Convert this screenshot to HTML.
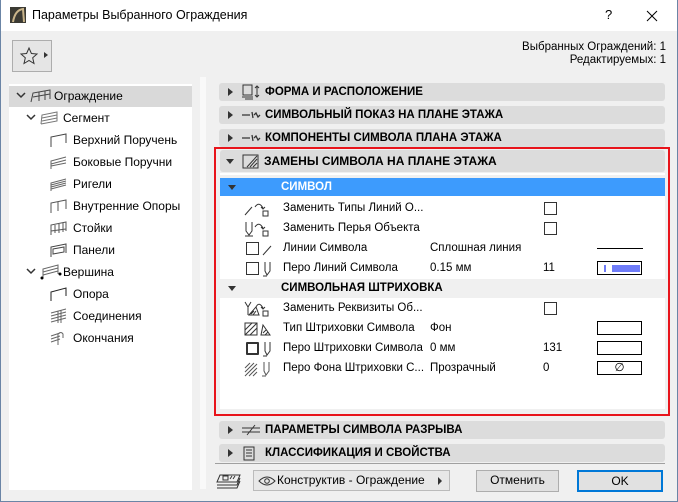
<!DOCTYPE html>
<html><head><meta charset="utf-8"><style>
*{box-sizing:border-box;margin:0;padding:0}
body{width:678px;height:502px;overflow:hidden;font-family:"Liberation Sans",sans-serif;font-size:12px;color:#000;background:#f0f0f0;position:relative}
.a{position:absolute}
.win{left:0;top:0;width:678px;height:502px;border:1px solid #6b85a6;border-top:none}
.title{left:1px;top:0;width:676px;height:31px;background:#fff}
.hdr{position:absolute;left:219px;width:446px;height:18px;background:#dcdcdc;border-radius:3px;font-weight:bold;font-size:11.5px;line-height:18px}
.hdr .t{position:absolute;left:46px}
.tri{position:absolute;width:0;height:0;border-top:4px solid transparent;border-bottom:4px solid transparent;border-left:5px solid #333;top:5px;left:9px}
.trd{position:absolute;width:0;height:0;border-left:4px solid transparent;border-right:4px solid transparent;border-top:5px solid #333}
.row{position:absolute;left:222px;width:443px;height:19px;background:#fff;line-height:19px;font-size:11.5px}
.row span{position:absolute}
.row span.l{left:61px}
.cb{position:absolute;width:13px;height:13px;border:1px solid #333;background:#fff;top:3px}
.box{position:absolute;left:375px;width:45px;height:14px;border:1px solid #000;top:2px}
.tree{font-size:12px;position:absolute;line-height:20px}
.btn{position:absolute;height:21px;border:1px solid #adadad;background:#e1e1e1;text-align:center;line-height:19px;font-size:12px}
</style></head><body>
<div class="a win"></div>
<div class="a title"></div>
<svg class="a" style="left:10px;top:7px" width="16" height="16"><rect width="16" height="16" fill="#3b3a33"/><path d="M3 15 Q5 3 13 2 L14 15" stroke="#c9b48a" stroke-width="2" fill="none"/></svg>
<div class="a" style="left:32px;top:8px;font-size:12.5px">Параметры Выбранного Ограждения</div>
<div class="a" style="left:605px;top:7px;font-size:13px">?</div>
<svg class="a" style="left:646px;top:10px" width="12" height="12"><path d="M1 1L11 11M11 1L1 11" stroke="#000" stroke-width="1"/></svg>

<div class="a" style="left:12px;top:40px;width:40px;height:32px;border:1px solid #adadad;background:#e5e5e5"></div>
<svg class="a" style="left:19px;top:46px" width="20" height="20"><path d="M10 2L12.4 7.5 18 8 13.7 11.8 15 17.5 10 14.5 5 17.5 6.3 11.8 2 8 7.6 7.5Z" fill="none" stroke="#333"/></svg>
<div class="a" style="left:44px;top:52px;width:0;height:0;border-top:3px solid transparent;border-bottom:3px solid transparent;border-left:4px solid #333"></div>

<div class="a" style="right:12px;top:41px;text-align:right;font-size:11.5px;line-height:13px">Выбранных Ограждений: 1<br>Редактируемых: 1</div>

<div class="a" style="left:9px;top:84px;width:183px;height:406px;background:#fff"></div>
<div class="a" style="left:9px;top:86px;width:183px;height:21px;background:#d9d9d9"></div>
<div class="a" style="left:200px;top:77px;width:6px;height:412px;background:#f9f9f9"></div>

<div class="tree" style="left:16px;top:86px">
<svg class="a" style="left:0;top:6px" width="10" height="8"><path d="M1 1L5 5L9 1" stroke="#333" fill="none" stroke-width="1.5"/></svg>
<svg class="a" style="left:14px;top:3px" width="22" height="14"><path d="M1 13L3 4L20 1L20 10M3 8L20 5M9 3L9 12M15 2L15 11" stroke="#444" fill="none"/></svg>
<span class="a" style="left:38px;white-space:nowrap">Ограждение</span></div>
<div class="tree" style="left:26px;top:108px">
<svg class="a" style="left:0;top:6px" width="10" height="8"><path d="M1 1L5 5L9 1" stroke="#333" fill="none" stroke-width="1.5"/></svg>
<svg class="a" style="left:14px;top:3px" width="18" height="14"><path d="M1 13L2 4L17 1L17 10L1 13M2 7L17 4M2 10L17 7" stroke="#777" fill="none"/></svg>
<span class="a" style="left:37px;white-space:nowrap">Сегмент</span></div>
<div class="tree" style="left:50px;top:130px"><svg class="a" style="top:3px" width="18" height="15"><path d="M1 14L1 4L16 1L16 10" stroke="#444" fill="none"/></svg><span class="a" style="left:23px;white-space:nowrap">Верхний Поручень</span></div>
<div class="tree" style="left:50px;top:152px"><svg class="a" style="top:3px" width="18" height="15"><path d="M1 14L1 6L16 2M1 9L16 5M1 11L16 8" stroke="#666" fill="none"/></svg><span class="a" style="left:23px;white-space:nowrap">Боковые Поручни</span></div>
<div class="tree" style="left:50px;top:174px"><svg class="a" style="top:3px" width="18" height="15"><path d="M1 14L1 6L16 2M1 8L16 4M1 10L16 6M1 12L16 8" stroke="#666" fill="none"/></svg><span class="a" style="left:23px;white-space:nowrap">Ригели</span></div>
<div class="tree" style="left:50px;top:196px"><svg class="a" style="top:3px" width="18" height="15"><path d="M1 14L1 4L16 1L16 10M8 3L8 12" stroke="#555" fill="none"/></svg><span class="a" style="left:23px;white-space:nowrap">Внутренние Опоры</span></div>
<div class="tree" style="left:50px;top:218px"><svg class="a" style="top:3px" width="18" height="15"><path d="M1 14L1 4L16 1L16 10M5 4L5 12M9 3L9 12M13 2L13 11M1 10L16 8" stroke="#555" fill="none"/></svg><span class="a" style="left:23px;white-space:nowrap">Стойки</span></div>
<div class="tree" style="left:50px;top:240px"><svg class="a" style="top:3px" width="18" height="15"><path d="M1 14L1 4L16 1L16 10M3 6L14 4L14 9L3 11Z" stroke="#444" fill="none"/></svg><span class="a" style="left:23px;white-space:nowrap">Панели</span></div>
<div class="tree" style="left:26px;top:262px">
<svg class="a" style="left:0;top:6px" width="10" height="8"><path d="M1 1L5 5L9 1" stroke="#333" fill="none" stroke-width="1.5"/></svg>
<svg class="a" style="left:14px;top:2px" width="22" height="16"><path d="M3 14L3 5L18 1L18 10M3 8L18 4M3 11L18 7" stroke="#666" fill="none"/><circle cx="2" cy="14" r="1.5"/><circle cx="20" cy="10" r="1.5"/></svg>
<span class="a" style="left:37px;white-space:nowrap">Вершина</span></div>
<div class="tree" style="left:50px;top:284px"><svg class="a" style="top:3px" width="18" height="15"><path d="M1 14L1 5L16 1L16 9" stroke="#222" fill="none"/></svg><span class="a" style="left:23px;white-space:nowrap">Опора</span></div>
<div class="tree" style="left:50px;top:306px"><svg class="a" style="top:2px" width="18" height="16"><path d="M1 5L16 1M1 8L16 4M1 11L16 7M1 14L16 10M8 3L8 15M11 2L11 15" stroke="#666" fill="none"/></svg><span class="a" style="left:23px;white-space:nowrap">Соединения</span></div>
<div class="tree" style="left:50px;top:328px"><svg class="a" style="top:2px" width="18" height="16"><path d="M1 6L10 3M1 9L10 6M1 12L10 9M8 15L8 4Q11 1 13 4L13 8" stroke="#666" fill="none"/></svg><span class="a" style="left:23px;white-space:nowrap">Окончания</span></div>

<div class="hdr" style="top:83px"><div class="tri"></div><svg class="a" style="left:22px;top:1px" width="20" height="16"><rect x="2" y="1" width="9" height="10" fill="none" stroke="#333"/><path d="M1 13L12 13M4 15L12 15M16 2L16 13M14 4L16 2L18 4M14 11L16 13L18 11" stroke="#333" fill="none"/></svg><span class="t">ФОРМА И РАСПОЛОЖЕНИЕ</span></div>
<div class="hdr" style="top:106px"><div class="tri"></div><svg class="a" style="left:22px;top:5px" width="20" height="8"><path d="M1 4L9 4M11 1L12 7M13 4L15 2L17 6L19 4" stroke="#333" fill="none" stroke-width="1.3"/></svg><span class="t">СИМВОЛЬНЫЙ ПОКАЗ НА ПЛАНЕ ЭТАЖА</span></div>
<div class="hdr" style="top:129px"><div class="tri"></div><svg class="a" style="left:22px;top:5px" width="20" height="8"><path d="M1 4L9 4M11 1L12 7M13 4L15 2L17 6L19 4" stroke="#333" fill="none" stroke-width="1.3"/></svg><span class="t">КОМПОНЕНТЫ СИМВОЛА ПЛАНА ЭТАЖА</span></div>

<div class="a" style="left:214px;top:147px;width:456px;height:269px;border:2px solid #e8141b"></div>
<div class="a" style="left:220px;top:173px;width:445px;height:236px;background:#fff"></div>
<div class="a" style="left:220px;top:175px;width:445px;height:3px;background:#f0f0f0"></div>
<div class="hdr" style="top:150px;left:220px;width:445px;height:22px;line-height:22px;font-size:12px"><div class="trd" style="left:6px;top:9px"></div><svg class="a" style="left:22px;top:3px" width="20" height="17"><rect x="1" y="2" width="15" height="13" fill="none" stroke="#333"/><path d="M8 14L15 6M11 14L15 10M5 14L15 3" stroke="#333"/></svg><span class="t" style="left:44px">ЗАМЕНЫ СИМВОЛА НА ПЛАНЕ ЭТАЖА</span></div>

<div class="a" style="left:220px;top:178px;width:445px;height:18px;background:#3d9bfd;color:#fff;font-weight:bold;line-height:18px;font-size:11.5px"><div class="trd" style="left:8px;top:7px;border-top-color:#333"></div><span class="a" style="left:61px">СИМВОЛ</span></div>

<div class="row" style="top:198px;height:20px"><svg class="a" style="left:22px;top:3px" width="26" height="16"><path d="M1 14L8 6M11 6Q15 0 19 7M17 6L19 8L21 6" stroke="#333" fill="none"/><rect x="19" y="10" width="5" height="5" fill="none" stroke="#333"/></svg><span class="l" style="top:1px">Заменить Типы Линий О...</span><div class="cb" style="left:322px;top:4px"></div></div>
<div class="row" style="top:219px"><svg class="a" style="left:22px;top:2px" width="26" height="16"><path d="M2 1L2 10L5 14L8 10L8 1M1 15L9 15M11 6Q15 0 19 7M17 6L19 8L21 6" stroke="#333" fill="none"/><rect x="19" y="10" width="5" height="5" fill="none" stroke="#333"/></svg><span class="l">Заменить Перья Объекта</span><div class="cb" style="left:322px"></div></div>
<div class="row" style="top:239px"><div class="cb" style="left:24px"></div><svg class="a" style="left:40px;top:3px" width="10" height="14"><path d="M1 13L9 4" stroke="#333"/></svg><span class="l">Линии Символа</span><span style="left:208px">Сплошная линия</span><div class="a" style="left:375px;top:9px;width:46px;height:1px;background:#000"></div></div>
<div class="row" style="top:259px"><div class="cb" style="left:24px"></div><svg class="a" style="left:40px;top:2px" width="10" height="16"><path d="M3 1L3 10L5 14L8 10L8 1M1 15L5 15" stroke="#333" fill="none"/></svg><span class="l">Перо Линий Символа</span><span style="left:208px">0.15 мм</span><span style="left:321px">11</span><div class="box"><div class="a" style="left:6px;top:3px;width:2px;height:7px;background:#6f7cf8"></div><div class="a" style="left:14px;top:3px;width:28px;height:7px;background:#6f7cf8"></div></div></div>

<div class="a" style="left:220px;top:279px;width:445px;height:19px;background:#f0f0f0;font-weight:bold;line-height:19px;font-size:11.5px"><div class="trd" style="left:8px;top:7px"></div><span class="a" style="left:61px">СИМВОЛЬНАЯ ШТРИХОВКА</span></div>
<div class="row" style="top:299px"><svg class="a" style="left:22px;top:2px" width="26" height="16"><path d="M1 1L4 6L7 1M4 6L4 14M5 14L12 6L15 14ZM12 6Q15 0 19 7M17 6L19 8L21 6M7 13L10 10M9 14L12 10" stroke="#333" fill="none"/><rect x="19" y="10" width="5" height="5" fill="none" stroke="#333"/></svg><span class="l">Заменить Реквизиты Об...</span><div class="cb" style="left:322px"></div></div>
<div class="row" style="top:319px"><svg class="a" style="left:22px;top:2px" width="28" height="16"><rect x="1" y="2" width="12" height="12" fill="none" stroke="#333"/><path d="M1 9L8 2M1 14L13 2M6 14L13 7M17 14L19 4L26 14ZM19 12L22 9M21 14L24 11" stroke="#333" fill="none"/></svg><span class="l">Тип Штриховки Символа</span><span style="left:208px">Фон</span><div class="box"></div></div>
<div class="row" style="top:339px"><div class="cb" style="left:24px;border-width:2px;border-radius:1px"></div><svg class="a" style="left:40px;top:2px" width="10" height="16"><path d="M3 1L3 10L5 14L8 10L8 1M1 15L5 15" stroke="#333" fill="none"/></svg><span class="l">Перо Штриховки Символа</span><span style="left:208px">0 мм</span><span style="left:321px">131</span><div class="box"></div></div>
<div class="row" style="top:359px"><svg class="a" style="left:22px;top:2px" width="28" height="16"><path d="M1 7L6 2M1 11L10 2M1 15L13 3M5 15L13 7M9 15L13 11M20 1L20 10L22 14L25 10L25 1M18 15L22 15" stroke="#555" fill="none"/></svg><span class="l">Перо Фона Штриховки С...</span><span style="left:208px">Прозрачный</span><span style="left:321px">0</span><div class="box" style="text-align:center;line-height:12px">∅</div></div>

<div class="hdr" style="top:421px"><div class="tri"></div><svg class="a" style="left:22px;top:3px" width="20" height="12"><path d="M1 4L19 4M1 8L19 8M6 11L14 1" stroke="#333" fill="none"/></svg><span class="t">ПАРАМЕТРЫ СИМВОЛА РАЗРЫВА</span></div>
<div class="hdr" style="top:444px"><div class="tri"></div><svg class="a" style="left:24px;top:2px" width="14" height="15"><rect x="1" y="1" width="10" height="13" fill="none" stroke="#333"/><path d="M3 4L9 4M3 7L9 7M3 10L9 10" stroke="#333"/></svg><span class="t">КЛАССИФИКАЦИЯ И СВОЙСТВА</span></div>
<div class="a" style="left:215px;top:463px;width:450px;height:1px;background:#a0a0a0"></div>

<svg class="a" style="left:216px;top:472px" width="26" height="20"><path d="M4 3L24 3L21 10L1 10ZM1 13L21 13L24 6M1 16L21 16L24 9" stroke="#333" fill="none"/><rect x="7" y="4" width="5" height="4" fill="none" stroke="#333"/><path d="M14 7L16 4M17 7L19 4" stroke="#333"/></svg>
<div class="btn" style="left:253px;top:470px;width:197px;border-color:#bbb;background:#e8e8e8;text-align:left"><svg class="a" style="left:4px;top:5px" width="18" height="10"><path d="M1 5Q9 -3 17 5Q9 13 1 5Z" fill="none" stroke="#333"/><circle cx="9" cy="5" r="2.3" fill="none" stroke="#333"/></svg><span class="a" style="left:23px">Конструктив - Ограждение</span><div class="a" style="right:7px;top:6px;width:0;height:0;border-top:4px solid transparent;border-bottom:4px solid transparent;border-left:4px solid #333"></div></div>
<div class="btn" style="left:476px;top:470px;width:83px;height:22px">Отменить</div>
<div class="btn" style="left:577px;top:470px;width:86px;height:22px;border:2px solid #0078d7;line-height:18px">OK</div>
</body></html>
